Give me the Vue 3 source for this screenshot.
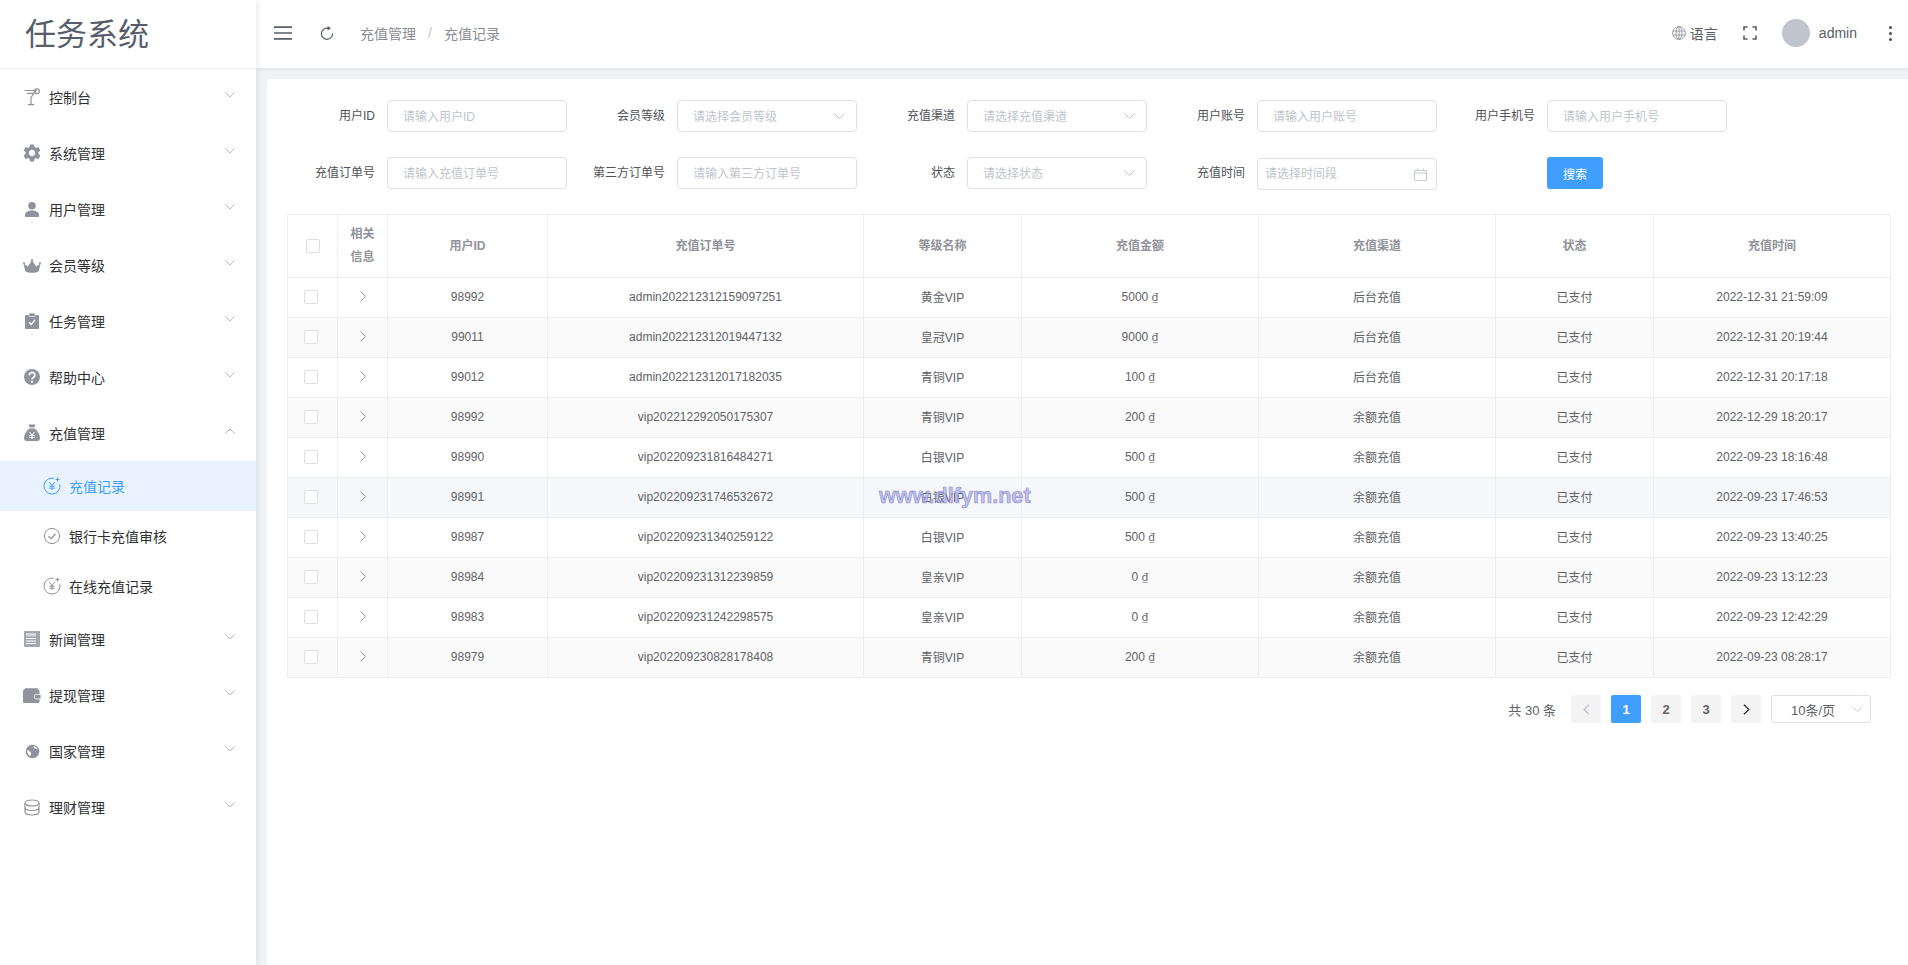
<script setup>
const menuTop = [
  { key: 'cocktail', label: '控制台' },
  { key: 'gear', label: '系统管理' },
  { key: 'user', label: '用户管理' },
  { key: 'crown', label: '会员等级' },
  { key: 'task', label: '任务管理' },
  { key: 'help', label: '帮助中心' }
]
const subMenu = [
  { key: 'coin', label: '充值记录', active: true },
  { key: 'check', label: '银行卡充值审核' },
  { key: 'coin', label: '在线充值记录' }
]
const menuBottom = [
  { key: 'news', label: '新闻管理' },
  { key: 'wallet', label: '提现管理' },
  { key: 'globe', label: '国家管理' },
  { key: 'db', label: '理财管理' }
]
const filters = [
  { label: '用户ID', ph: '请输入用户ID' },
  { label: '会员等级', ph: '请选择会员等级', select: true },
  { label: '充值渠道', ph: '请选择充值渠道', select: true },
  { label: '用户账号', ph: '请输入用户账号' },
  { label: '用户手机号', ph: '请输入用户手机号' },
  { label: '充值订单号', ph: '请输入充值订单号' },
  { label: '第三方订单号', ph: '请输入第三方订单号' },
  { label: '状态', ph: '请选择状态', select: true },
  { label: '充值时间', ph: '请选择时间段', date: true }
]
const cols = [50, 50, 160, 316, 158, 237, 237, 158, 237]
const heads = ['用户ID', '充值订单号', '等级名称', '充值金额', '充值渠道', '状态', '充值时间']
const rows = [
  ['98992', 'admin202212312159097251', '黄金VIP', '5000', '后台充值', '2022-12-31 21:59:09'],
  ['99011', 'admin202212312019447132', '皇冠VIP', '9000', '后台充值', '2022-12-31 20:19:44'],
  ['99012', 'admin202212312017182035', '青铜VIP', '100', '后台充值', '2022-12-31 20:17:18'],
  ['98992', 'vip202212292050175307', '青铜VIP', '200', '余额充值', '2022-12-29 18:20:17'],
  ['98990', 'vip202209231816484271', '白银VIP', '500', '余额充值', '2022-09-23 18:16:48'],
  ['98991', 'vip202209231746532672', '白银VIP', '500', '余额充值', '2022-09-23 17:46:53'],
  ['98987', 'vip202209231340259122', '白银VIP', '500', '余额充值', '2022-09-23 13:40:25'],
  ['98984', 'vip202209231312239859', '皇亲VIP', '0', '余额充值', '2022-09-23 13:12:23'],
  ['98983', 'vip202209231242298575', '皇亲VIP', '0', '余额充值', '2022-09-23 12:42:29'],
  ['98979', 'vip202209230828178408', '青铜VIP', '200', '余额充值', '2022-09-23 08:28:17']
]
</script>

<template>
  <div class="app">
    <aside class="sidebar">
      <div class="logo">任务系统</div>
      <nav>
        <div v-for="item in menuTop" :key="item.label" class="menu-item">
          <svg class="ico" viewBox="0 0 18 18">
            <g v-if="item.key === 'cocktail'" fill="none" stroke="currentColor" stroke-width="1.2">
              <path d="M1.5 2.5H13L8 9.5V16M4.8 16.6H11.2M3.8 5.4H10.8" />
              <circle cx="14" cy="3.2" r="2.4" />
            </g>
            <path v-else-if="item.key === 'gear'" transform="translate(-1.7 -1.7) scale(.89)" fill="currentColor" d="M19.14 12.94c.04-.3.06-.61.06-.94 0-.32-.02-.64-.07-.94l2.03-1.58c.18-.14.23-.41.12-.61l-1.92-3.32c-.12-.22-.37-.29-.59-.22l-2.39.96c-.5-.38-1.03-.7-1.62-.94l-.36-2.54c-.04-.24-.24-.41-.48-.41h-3.84c-.24 0-.43.17-.47.41l-.36 2.54c-.59.24-1.13.57-1.62.94l-2.39-.96c-.22-.08-.47 0-.59.22L2.74 8.87c-.12.21-.08.47.12.61l2.03 1.58c-.05.3-.09.63-.09.94s.02.64.07.94l-2.03 1.58c-.18.14-.23.41-.12.61l1.92 3.32c.12.22.37.29.59.22l2.39-.96c.5.38 1.03.7 1.62.94l.36 2.54c.05.24.24.41.48.41h3.84c.24 0 .44-.17.47-.41l.36-2.54c.59-.24 1.13-.56 1.62-.94l2.39.96c.22.08.47 0 .59-.22l1.92-3.32c.12-.22.07-.47-.12-.61l-2.01-1.58zM12 15.6c-1.98 0-3.6-1.62-3.6-3.6s1.62-3.6 3.6-3.6 3.6 1.62 3.6 3.6-1.62 3.6-3.6 3.6z" />
            <g v-else-if="item.key === 'user'" fill="currentColor">
              <circle cx="9" cy="5.8" r="3.8" />
              <path d="M2 15c0-3 3-4.5 7-4.5s7 1.5 7 4.5v1a1 1 0 0 1-1 1H3a1 1 0 0 1-1-1z" />
            </g>
            <g v-else-if="item.key === 'crown'" fill="currentColor">
              <path d="M0.3 7.5L4.8 10.5L9 4.5L13.2 10.5L17.7 7.5L15.5 15.5C13 17.3 5 17.3 2.5 15.5Z" />
              <circle cx="9" cy="4.5" r="1.2" /><circle cx="1" cy="7" r="1" /><circle cx="17" cy="7" r="1" />
            </g>
            <g v-else-if="item.key === 'task'">
              <rect x="2" y="3" width="14" height="14" rx="1" fill="currentColor" />
              <rect x="6" y="1" width="6" height="3.4" fill="currentColor" stroke="#fff" stroke-width=".6" />
              <path d="M6 10.2L8.2 12.4L12 8" fill="none" stroke="#fff" stroke-width="1.4" />
            </g>
            <g v-else-if="item.key === 'help'">
              <circle cx="9" cy="9" r="8" fill="currentColor" />
              <path d="M6.3 7.2a2.8 2.6 0 1 1 4.3 2.1c-1 .7-1.6 1.1-1.6 2.3" fill="none" stroke="#fff" stroke-width="1.7" />
              <circle cx="9" cy="13.8" r="1.1" fill="#fff" />
            </g>
          </svg>
          <span class="menu-label">{{ item.label }}</span>
          <svg class="arrow" viewBox="0 0 10 6"><path d="M.5.5L5 5L9.5.5" /></svg>
        </div>

        <div class="menu-item">
          <svg class="ico" viewBox="0 0 18 18">
            <path fill="currentColor" d="M5.5.5H12.5L11.2 3.6H6.8Z" />
            <path fill="currentColor" d="M6.5 4.6H11.5C15 7 17 11 17 14a3 3 0 0 1-3 3H4a3 3 0 0 1-3-3C1 11 3 7 6.5 4.6Z" />
            <path fill="none" stroke="#fff" stroke-width="1" d="M6.3 7.8L9 10.8L11.7 7.8M9 10.8V15M6.3 11.3H11.7M6.3 13.3H11.7" />
          </svg>
          <span class="menu-label">充值管理</span>
          <svg class="arrow" viewBox="0 0 10 6"><path d="M.5 5.5L5 1L9.5 5.5" /></svg>
        </div>

        <div v-for="sub in subMenu" :key="sub.label" class="sub-item" :class="{ active: sub.active }">
          <svg class="sub-ico" viewBox="0 0 18 18" fill="none" stroke="currentColor">
            <g v-if="sub.key === 'coin'" stroke-width="1">
              <path d="M11 1.3A8 8 0 1 0 16.8 7.3" />
              <path d="M14.5.5V4.5M12.5 2.5H16.5" />
              <path d="M6.3 5.2L9 8.4L11.7 5.2M9 8.4V13.2M6.3 9.2H11.7M6.3 11.2H11.7" />
            </g>
            <g v-else stroke-width="1">
              <circle cx="9" cy="9" r="7.6" />
              <path d="M5.4 9.2L8 11.6L12.6 7" stroke-width="1.2" />
            </g>
          </svg>
          <span>{{ sub.label }}</span>
        </div>

        <div v-for="item in menuBottom" :key="item.label" class="menu-item">
          <svg class="ico" viewBox="0 0 18 18">
            <g v-if="item.key === 'news'">
              <rect x="1" y="1" width="16" height="16" rx="1" fill="#a3a6b0" />
              <rect x="3" y="3" width="10" height="3.4" fill="#d4d6db" />
              <path d="M3 8.5H13M3 11H13M3 13.5H13" stroke="#fff" stroke-width="1" />
            </g>
            <g v-else-if="item.key === 'wallet'" fill="currentColor">
              <path d="M2 2.2H15V4.2H1Z" />
              <rect x="0" y="3.4" width="16.5" height="13.6" rx="1.5" />
              <rect x="11.5" y="8.5" width="6.5" height="4.4" rx=".8" stroke="#fff" stroke-width=".8" />
            </g>
            <g v-else-if="item.key === 'globe'">
              <circle cx="9.5" cy="9.5" r="6.8" fill="currentColor" />
              <path fill="#fff" d="M4 8.2C5.6 8 7 9 7.8 10.5C8.3 11.6 7.8 12.8 7.4 14.2C5.6 13.4 4.2 10.8 4 8.2ZM10.8 4C10.2 5 10.8 6 12.2 6.4C13.2 6.7 14 6.8 14.6 7.2C13.8 5.6 12.4 4.4 10.8 4Z" />
            </g>
            <g v-else fill="none" stroke="currentColor" stroke-width="1.2">
              <ellipse cx="9" cy="5" rx="7" ry="3" />
              <path d="M2 5V14c0 1.7 3 3 7 3s7-1.3 7-3V5M2 9.5c0 1.7 3 3 7 3s7-1.3 7-3" />
            </g>
          </svg>
          <span class="menu-label">{{ item.label }}</span>
          <svg class="arrow" viewBox="0 0 10 6"><path d="M.5.5L5 5L9.5.5" /></svg>
        </div>
      </nav>
    </aside>

    <div class="main">
      <header class="topbar">
        <svg class="hamburger" viewBox="0 0 18 14"><path d="M0 1.2H18M0 7H18M0 12.8H18" /></svg>
        <svg class="refresh" viewBox="0 0 14 14">
          <path d="M8.5 2.3A5.6 5.6 0 1 0 12.6 7.4" fill="none" stroke="#5a5e66" stroke-width="1.2" />
          <path d="M7.6 0L11 2.2L7.6 4.4Z" fill="#5a5e66" />
        </svg>
        <div class="crumbs">
          <span>充值管理</span>
          <span class="sep">/</span>
          <span>充值记录</span>
        </div>
        <div class="top-right">
          <svg class="globe" viewBox="0 0 14 14" fill="none" stroke="#8a8e96" stroke-width=".8">
            <circle cx="7" cy="7" r="6.4" />
            <ellipse cx="7" cy="7" rx="3" ry="6.4" />
            <path d="M.8 5H13.2M.8 9H13.2M7 .6V13.4" />
          </svg>
          <span class="lang">语言</span>
          <svg class="full" viewBox="0 0 14 14"><path d="M1 4.5V1H4.5M9.5 1H13V4.5M13 9.5V13H9.5M4.5 13H1V9.5" /></svg>
          <div class="avatar"></div>
          <span class="uname">admin</span>
          <div class="dots"><i></i><i></i><i></i></div>
        </div>
      </header>

      <div class="content">
        <section class="card">
          <div class="filters">
            <div v-for="f in filters" :key="f.label" class="field">
              <label class="field-label">{{ f.label }}</label>
              <div class="control" :class="{ 'is-date': f.date }">
                <span class="ph">{{ f.ph }}</span>
                <svg v-if="f.select" class="select-arrow" viewBox="0 0 11 6"><path d="M.5.5L5.5 5.5L10.5.5" /></svg>
                <svg v-if="f.date" class="calendar" viewBox="0 0 13 13"><path d="M.5 2.5H12.5V12.5H.5ZM.5 5H12.5M3.5 .5V2.5M9.5 .5V2.5" /></svg>
              </div>
            </div>
            <div class="field">
              <div class="field-label"></div>
              <button class="search" type="button">搜索</button>
            </div>
          </div>

          <div class="table-wrap">
            <table class="grid">
              <colgroup><col v-for="(w, i) in cols" :key="i" :style="{ width: w + 'px' }" /></colgroup>
              <thead>
                <tr>
                  <th class="keep"><span class="checkbox head-check"></span></th>
                  <th class="keep two-line">相关<br />信息</th>
                  <th v-for="h in heads" :key="h">{{ h }}</th>
                </tr>
              </thead>
              <tbody>
                <tr v-for="(r, i) in rows" :key="i" :class="{ striped: i % 2 === 1, hovered: i === 5 }">
                  <td><span class="checkbox row-check"></span></td>
                  <td><svg class="expand" viewBox="0 0 6 11"><path d="M.5.5L5.5 5.5L.5 10.5" /></svg></td>
                  <td>{{ r[0] }}</td>
                  <td>{{ r[1] }}</td>
                  <td>{{ r[2] }}</td>
                  <td>{{ r[3] }} <span class="dong">₫</span></td>
                  <td>{{ r[4] }}</td>
                  <td>已支付</td>
                  <td>{{ r[5] }}</td>
                </tr>
              </tbody>
            </table>
            <div class="watermark">www.dlfym.net</div>
          </div>

          <div class="pager">
            <span class="total">共 30 条</span>
            <button class="page-btn disabled" type="button"><svg viewBox="0 0 7 11"><path d="M6 .8L1.2 5.5L6 10.2" /></svg></button>
            <button class="page-btn current" type="button">1</button>
            <button class="page-btn" type="button">2</button>
            <button class="page-btn" type="button">3</button>
            <button class="page-btn" type="button"><svg viewBox="0 0 7 11"><path d="M1 .8L5.8 5.5L1 10.2" /></svg></button>
            <div class="page-size">
              <span>10条/页</span>
              <svg viewBox="0 0 9 5"><path d="M.5.5L4.5 4.5L8.5.5" /></svg>
            </div>
          </div>
        </section>
      </div>
    </div>
  </div>
</template>

<style>
html, body { margin: 0; padding: 0; background: #fff; }
</style>

<style scoped>
* { box-sizing: border-box; }
.app {
  display: flex;
  height: 965px;
  overflow: hidden;
  font-family: "Liberation Sans", "Noto Sans CJK SC", sans-serif;
  color: #606266;
}
.sidebar {
  position: relative;
  z-index: 3;
  flex: 0 0 256px;
  background: #fff;
  box-shadow: 2px 0 6px rgba(0, 21, 41, .08);
}
.logo {
  height: 69px;
  padding: 0 0 5px 25px;
  display: flex;
  align-items: center;
  border-bottom: 1px solid #f0f0f0;
  font-size: 31px;
  color: #565e6e;
}
.menu-item {
  height: 56px;
  display: flex;
  align-items: center;
  padding-left: 23px;
  font-size: 14px;
  color: #303133;
}
.ico { width: 18px; height: 18px; color: #90939d; flex: none; }
.menu-label { margin-left: 8px; }
.arrow {
  width: 10px;
  height: 6px;
  margin: -4px 21px 0 auto;
  fill: none;
  stroke: #a8abb2;
  stroke-width: .9;
}
.sub-item {
  height: 50px;
  display: flex;
  align-items: center;
  padding-left: 43px;
  font-size: 14px;
  color: #303133;
}
.sub-ico { width: 18px; height: 18px; color: #90939d; margin-right: 8px; flex: none; }
.sub-item.active { background: #e8f3ff; color: #409eff; }
.sub-item.active .sub-ico { color: #409eff; }

.main {
  flex: 1;
  min-width: 0;
  display: flex;
  flex-direction: column;
  background: #f0f2f5;
}
.topbar {
  position: relative;
  z-index: 2;
  height: 68px;
  flex: none;
  display: flex;
  align-items: center;
  background: #fff;
  box-shadow: 0 1px 4px rgba(0, 21, 41, .08);
  padding: 0 0 2px 18px;
}
.hamburger { width: 18px; height: 14px; fill: none; stroke: #5a5e66; stroke-width: 1.7; flex: none; }
.refresh { width: 14px; height: 14px; margin-left: 28px; flex: none; }
.crumbs {
  margin-left: 26px;
  display: flex;
  align-items: center;
  font-size: 14px;
  color: #8a8d94;
}
.sep { margin: 0 12px; color: #c0c4cc; width: 4px; }
.top-right { margin-left: auto; display: flex; align-items: center; }
.globe { width: 14px; height: 14px; flex: none; }
.lang { margin-left: 4px; font-size: 14px; color: #5a5e66; }
.full { width: 14px; height: 14px; margin-left: 25px; fill: none; stroke: #5a5e66; stroke-width: 1.6; flex: none; }
.avatar { width: 28px; height: 28px; border-radius: 50%; background: #c0c4cc; margin-left: 25px; flex: none; }
.uname { margin-left: 9px; font-size: 14px; color: #5a5e66; }
.dots {
  margin: 0 16px 0 32px;
  display: flex;
  flex-direction: column;
  gap: 3px;
}
.dots i { display: block; width: 3px; height: 3px; border-radius: 50%; background: #4a4e58; }

.content { flex: 1; min-height: 0; padding: 11px 0 0 11px; }
.card {
  height: 100%;
  background: #fff;
  border-radius: 4px 0 0 0;
  padding-top: 21px;
}
.filters {
  display: grid;
  grid-template-columns: repeat(5, 290px);
  row-gap: 25px;
  padding-left: 10px;
}
.field { display: flex; align-items: center; height: 32px; }
.field-label {
  flex: 0 0 110px;
  padding: 0 12px 4px 0;
  text-align: right;
  font-size: 12px;
  color: #4f5258;
}
.control {
  position: relative;
  width: 180px;
  height: 32px;
  display: flex;
  align-items: center;
  padding: 0 0 2px 15px;
  border: 1px solid #dcdfe6;
  border-radius: 4px;
  font-size: 12px;
}
.is-date { padding-left: 7px; margin-top: 1px; }
.ph { color: #c0c4cc; }
.select-arrow {
  position: absolute;
  right: 11px;
  top: 12px;
  width: 11px;
  height: 6px;
  fill: none;
  stroke: #c0c4cc;
  stroke-width: 1;
}
.calendar {
  position: absolute;
  right: 9px;
  top: 9px;
  width: 13px;
  height: 13px;
  fill: none;
  stroke: #c0c4cc;
  stroke-width: .9;
}
.search {
  width: 56px;
  height: 32px;
  padding: 0;
  border: 0;
  border-radius: 3px;
  background: #409eff;
  color: #fff;
  font-size: 12px;
  font-family: inherit;
}
.table-wrap {
  position: relative;
  margin: 25px 18px 0 20px;
  border-top: 1px solid #ebeef5;
  border-left: 1px solid #ebeef5;
}
.grid {
  width: 1602px;
  table-layout: fixed;
  border-collapse: separate;
  border-spacing: 0;
  font-size: 12px;
}
.grid th, .grid td {
  text-align: center;
  border-right: 1px solid #ebeef5;
  border-bottom: 1px solid #ebeef5;
}
.grid th { height: 63px; padding: 0 0 3px; color: #909399; font-weight: 700; }
.grid th.keep { padding-bottom: 1px; }
.grid td { height: 40px; padding: 0 0 2px; color: #606266; }
.two-line { line-height: 23px; }
.dong { font-family: "Noto Sans", sans-serif; font-size: 11px; }
.striped td { background: #fafafa; }
.hovered td { background: #f5f7fa; }
.checkbox {
  display: block;
  background: #fff;
  border: 1px solid #dcdfe6;
  border-radius: 2px;
}
.head-check { width: 14px; height: 14px; margin-left: 18px; }
.row-check { width: 14px; height: 14px; margin-left: 16px; }
.expand {
  display: block;
  width: 6px;
  height: 11px;
  margin: 0 auto;
  fill: none;
  stroke: #8f9299;
  stroke-width: .9;
}
.watermark {
  position: absolute;
  left: 591px;
  top: 267px;
  font-size: 21.6px;
  line-height: 28px;
  font-weight: 700;
  white-space: nowrap;
  color: rgba(178, 178, 232, .8);
  -webkit-text-stroke: .6px rgba(110, 110, 190, .75);
  pointer-events: none;
}
.pager {
  margin-top: 17px;
  padding-right: 37px;
  display: flex;
  align-items: center;
  justify-content: flex-end;
  font-size: 13px;
}
.total { margin-right: 15px; color: #606266; }
.page-btn {
  width: 30px;
  height: 28px;
  margin-right: 10px;
  padding: 0;
  display: flex;
  align-items: center;
  justify-content: center;
  border: 0;
  border-radius: 2px;
  background: #f4f4f5;
  color: #606266;
  font: 700 13px "Liberation Sans", sans-serif;
}
.page-btn svg { width: 7px; height: 11px; fill: none; stroke: #303133; stroke-width: 1.3; }
.page-btn.disabled svg { stroke: #c0c4cc; }
.page-btn.current { background: #409eff; color: #fff; }
.page-size {
  position: relative;
  width: 100px;
  height: 28px;
  padding-left: 19px;
  display: flex;
  align-items: center;
  border: 1px solid #dcdfe6;
  border-radius: 3px;
  color: #606266;
}
.page-size svg {
  position: absolute;
  right: 8px;
  top: 11px;
  width: 9px;
  height: 5px;
  fill: none;
  stroke: #c0c4cc;
  stroke-width: 1;
}
</style>
